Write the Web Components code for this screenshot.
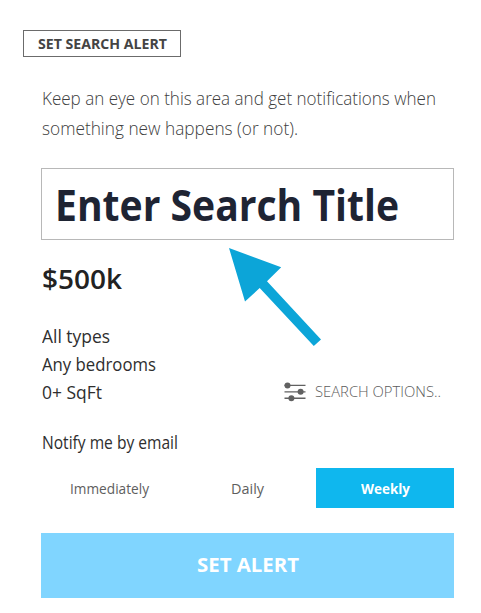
<!DOCTYPE html>
<html lang="en">
<head>
<meta charset="utf-8">
<title>Set Search Alert</title>
<style>
  body {
    margin: 0;
    background: #fff;
    font-family: "Open Sans", "Noto Sans", sans-serif;
  }
</style>
</head>
<body>
<search-alert></search-alert>

<script>
// One line of text, condensed to the width given in its attribute
class FitText extends HTMLElement {
  constructor() {
    super();
    this.attachShadow({ mode: "open" });
  }

  connectedCallback() {
    const width = Number(this.getAttribute("width"));
    this.shadowRoot.innerHTML = /* html */`
    <style>
      :host {
        display: block;
        width: ${width}px;
        white-space: nowrap;
      }

      span {
        display: inline-block;
        transform-origin: 0 50%;
      }
    </style>
    <span><slot></slot></span>
    `;
    const span = this.shadowRoot.querySelector("span");
    span.style.transform = `scaleX(${width / span.getBoundingClientRect().width})`;
  }
}

class OutlineButton extends HTMLElement {
  constructor() {
    super();
    this.attachShadow({ mode: "open" });
    this.shadowRoot.innerHTML = /* html */`
    <style>
      :host {
        display: flex;
        align-items: center;
        justify-content: center;
        box-sizing: border-box;
        width: 158px;
        height: 27px;
        border: 1px solid #6b6b6b;
        color: #444;
        font-size: 14.5px;
        font-weight: 670;
        line-height: 25px;
      }
    </style>
    <slot></slot>
    `;
  }
}

class TitleField extends HTMLElement {
  constructor() {
    super();
    this.attachShadow({ mode: "open" });
    this.shadowRoot.innerHTML = /* html */`
    <style>
      :host {
        display: flex;
        align-items: center;
        box-sizing: border-box;
        height: 72px;
        padding: 2px 0 0 13px;
        border: 1px solid #b8b8b8;
        color: #1e2433;
        font-size: 43px;
        font-weight: 750;
        line-height: 68px;
      }
    </style>
    <slot></slot>
    `;
  }
}

class SearchOptions extends HTMLElement {
  constructor() {
    super();
    this.attachShadow({ mode: "open" });
    this.shadowRoot.innerHTML = /* html */`
    <style>
      :host {
        display: flex;
        align-items: center;
        gap: 9px;
        color: #5c5c5c;
        font-size: 14.5px;
        font-weight: 320;
        line-height: 28px;
      }

      svg {
        display: block;
      }
    </style>
    <svg width="22" height="20" viewBox="0 0 22 20" fill="#616161">
      <path d="M.5 2.8h21v1.3H.5zM.5 9.2h21v1.3H.5zM.5 15.6h21v1.3H.5z"/>
      <circle cx="3.5" cy="3.4" r="3"/>
      <circle cx="16.6" cy="9.8" r="3"/>
      <circle cx="7.4" cy="16.2" r="3"/>
    </svg>
    <slot></slot>
    `;
  }
}

class FrequencyTab extends HTMLElement {
  constructor() {
    super();
    this.attachShadow({ mode: "open" });
    this.shadowRoot.innerHTML = /* html */`
    <style>
      :host {
        display: flex;
        align-items: center;
        justify-content: center;
        color: #5e5e5e;
        font-size: 15px;
        line-height: 40px;
      }

      :host([active]) {
        background: #0fb7ee;
        color: #fff;
        font-weight: 700;
      }
    </style>
    <slot></slot>
    `;
  }
}

class SubmitButton extends HTMLElement {
  constructor() {
    super();
    this.attachShadow({ mode: "open" });
    this.shadowRoot.innerHTML = /* html */`
    <style>
      :host {
        display: flex;
        align-items: center;
        justify-content: center;
        height: 65px;
        background: #80d5ff;
        color: #fff;
        font-size: 19px;
        font-weight: 700;
        line-height: 65px;
      }
    </style>
    <slot></slot>
    `;
  }
}

class PointerArrow extends HTMLElement {
  constructor() {
    super();
    this.attachShadow({ mode: "open" });
    this.shadowRoot.innerHTML = /* html */`
    <style>
      :host {
        display: block;
        pointer-events: none;
      }

      svg {
        display: block;
      }
    </style>
    <svg width="94" height="100" viewBox="0 0 94 100">
      <path fill="#0ca5d8" d="M1 0 53.2 19.3 39 33.2 93 91.5 85.8 98 31.7 40 17 53.5z"/>
    </svg>
    `;
  }
}

class SearchAlert extends HTMLElement {
  constructor() {
    super();
    this.attachShadow({ mode: "open" });
  }

  static get styles() {
    return /* css */`
      :host {
        display: block;
        position: relative;
        box-sizing: border-box;
        width: 481px;
        height: 613px;
        padding: 30px 27px 0 23px;
        overflow: hidden;
      }

      main {
        padding: 26px 0 0 18px;
      }

      .intro {
        padding-left: 1px;
        color: #404040;
        font-size: 18px;
        font-weight: 300;
        line-height: 30px;
        margin-bottom: 25px;
      }

      .price {
        margin-top: 22px;
        padding-left: 1px;
        color: #222;
        font-size: 27.5px;
        font-weight: 600;
        line-height: 34px;
      }

      .summary {
        display: flex;
        justify-content: space-between;
        align-items: flex-end;
        margin-top: 26px;
        padding: 0 13px 0 1px;
      }

      .filters, .notify {
        color: #2e2e2e;
        font-size: 17.5px;
        font-weight: 370;
        line-height: 28px;
      }

      .notify {
        margin-top: 22px;
        padding-left: 1px;
      }

      .tabs {
        display: grid;
        grid-template-columns: 137px 138px 138px;
        height: 40px;
        margin: 12px 0 25px;
      }

      pointer-arrow {
        position: absolute;
        left: 228px;
        top: 248px;
      }
    `;
  }

  connectedCallback() {
    this.shadowRoot.innerHTML = /* html */`
    <style>${SearchAlert.styles}</style>
    <outline-button><fit-text width="129">SET SEARCH ALERT</fit-text></outline-button>
    <main>
      <div class="intro">
        <fit-text width="394">Keep an eye on this area and get notifications when</fit-text>
        <fit-text width="256">something new happens (or not).</fit-text>
      </div>
      <title-field><fit-text width="344">Enter Search Title</fit-text></title-field>
      <div class="price"><fit-text width="80">$500k</fit-text></div>
      <div class="summary">
        <div class="filters">
          <fit-text width="68">All types</fit-text>
          <fit-text width="114">Any bedrooms</fit-text>
          <fit-text width="60">0+ SqFt</fit-text>
        </div>
        <search-options><fit-text width="126">SEARCH OPTIONS..</fit-text></search-options>
      </div>
      <div class="notify"><fit-text width="136">Notify me by email</fit-text></div>
      <div class="tabs">
        <frequency-tab><fit-text width="79">Immediately</fit-text></frequency-tab>
        <frequency-tab><fit-text width="33">Daily</fit-text></frequency-tab>
        <frequency-tab active><fit-text width="49">Weekly</fit-text></frequency-tab>
      </div>
      <submit-button><fit-text width="102">SET ALERT</fit-text></submit-button>
    </main>
    <pointer-arrow></pointer-arrow>
    `;
  }
}

customElements.define("outline-button", OutlineButton);
customElements.define("title-field", TitleField);
customElements.define("search-options", SearchOptions);
customElements.define("frequency-tab", FrequencyTab);
customElements.define("submit-button", SubmitButton);
customElements.define("pointer-arrow", PointerArrow);
customElements.define("search-alert", SearchAlert);
// Defined last so that every line is measured inside its styled parent
customElements.define("fit-text", FitText);
</script>
</body>
</html>
